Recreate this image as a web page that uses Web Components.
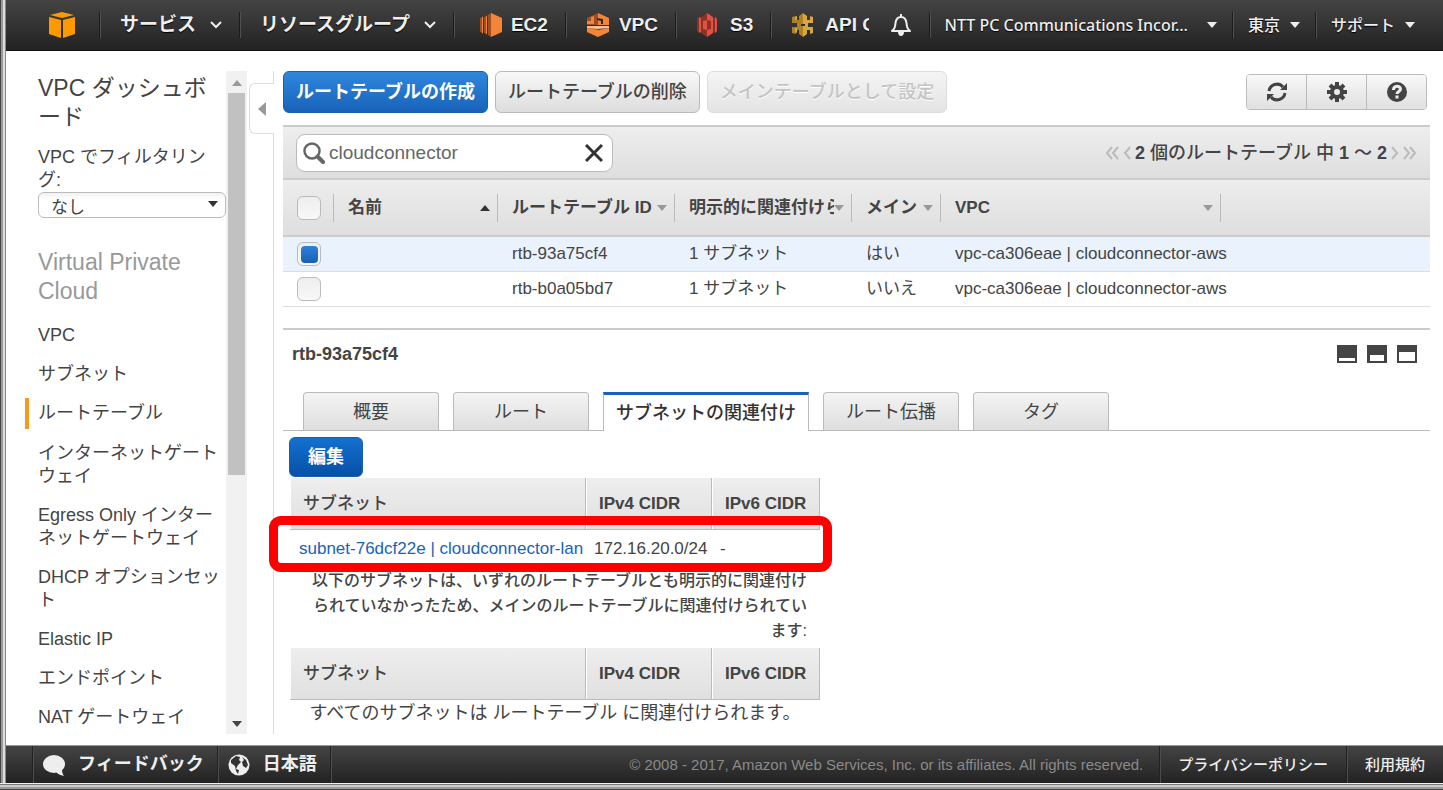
<!DOCTYPE html>
<html lang="ja">
<head>
<meta charset="utf-8">
<title>VPC Management Console</title>
<style>
  html, body { margin: 0; height: 100%; }
  body {
    font-family: "Liberation Sans", "Noto Sans CJK JP", sans-serif;
    font-size: 18px;
    color: #444;
    background: #fff;
    line-break: normal;
  }
</style>
</head>
<body>
<vpc-console></vpc-console>

<script>
const ICONS = {
  cube: ['0 0 26 26', `<g fill="#f90"><path d="M13 0 25 3 13 6 1 3z"/><path d="M0 5l12 3v18L0 22z"/><path d="M26 5 14 8v18l12-4z"/></g>`],
  ec2: ['0 0 22 24', `<path fill="#9d5025" d="M0 5l3-1v16l-3-1zM4 4l3-1v18l-3-1z"/><path fill="#f58536" d="M2 4l1-.5v17L2 20zM6 3l1-.5v19L6 21z"/><path fill="#9d5025" d="M8 2l3-2v24l-3-2z"/><path fill="#f58536" d="M11 0l11 5v14l-11 5z"/>`],
  vpc: ['0 0 23 24', `<path fill="#9d5025" d="M0 5 11 0v24L0 19z"/><path fill="#f58536" d="M11 0l11 5v7H11zM0 15l11 2 11-2v4l-11 5-11-5z"/><path fill="#f58536" d="M4 4l3-1v8H0V8h4z"/><path fill="#2d2d2d" d="M10 5l6 1v5h-2V8l-4-1zM0 12h22v1H0z"/><path fill="#fbbf93" d="M0 13h22v2l-11 1-11-1z"/>`],
  s3: ['0 0 24 24', `<path fill="#8c3123" d="M0 6l2-2v16l-2-2zM4 4l6-4v24l-6-4z"/><path fill="#e05243" d="M2 4l2 1v14l-2 1zM10 0l6 4v16l-6 4zM18 4l2 2v12l-2 2z"/><path fill="#8c3123" d="M16 5l2-1v16l-2-1z"/><path fill="#e05243" d="M6 8l4-1v10l-4-1z"/><path fill="#8c3123" d="M10 7l4 1v8l-4 1z"/>`],
  api: ['0 0 24 24', `<path fill="#ad8226" d="M0 4l4-1v4h3V3l4-3v24l-4-3v-4H4v4l-4-1v-6h5v-4H0z"/><path fill="#d9a741" d="M11 0l4 3v4h3V3l3 1v6h-5v4h5v6l-3 1v-4h-3v4l-4 3zM3 4l2-1v4H3zM3 15h2v5l-2-1z"/><path fill="#2d2d2d" d="M9 11h4v2H9z"/>`],
  bell: ['0 0 22 22', `<path fill="none" stroke="#eee" stroke-width="2" stroke-linejoin="round" d="M2 17c3-3 3-4 3.500-8 .5-4 2-6 5.500-6s5 2 5.500 6c.5 4 .5 5 3.500 8z"/><path fill="#eee" d="M10 0h2v3h-2zM8 18h6c0 2-1 4-3 4s-3-2-3-4z"/>`],
  chevron: ['0 0 12 8', `<path d="M1 1l5 5 5-5" fill="none" stroke="#eee" stroke-width="2"/>`],
  caret: ['0 0 10 6', `<path fill="currentColor" d="M0 0h10L5 6z"/>`],
  refresh: ['0 0 20 20', `<path fill="none" stroke="#444" stroke-width="3" d="M2 9a8 8 0 0 1 14-4M18 11a8 8 0 0 1-14 4"/><path fill="#444" d="M20 1v7h-7zM0 19v-7h7z"/>`],
  gear: ['0 0 20 20', `<path fill="none" stroke="#444" stroke-width="4" d="M10 0v4M10 16v4M0 10h4M16 10h4M3 3l3 3M14 14l3 3M17 3l-3 3M6 14l-3 3"/><circle cx="10" cy="10" r="5" fill="none" stroke="#444" stroke-width="4"/>`],
  help: ['0 0 20 20', `<circle cx="10" cy="10" r="10" fill="#444"/><path fill="none" stroke="#eee" stroke-width="3" d="M6.500 8c0-5 7-4.500 7-1 0 2.500-3.500 2.500-3.500 5"/><path fill="#eee" d="M8.500 13.500h3v3h-3z"/>`],
  search: ['0 0 22 22', `<circle cx="9" cy="9" r="7.500" fill="none" stroke="#666" stroke-width="2.500"/><path d="M14.500 14.500l5.500 5.500" stroke="#666" stroke-width="4" stroke-linecap="round"/>`],
  close: ['0 0 18 18', `<path d="M1 1l16 16M17 1 1 17" stroke="#333" stroke-width="3"/>`],
  first: ['0 0 14 14', `<path d="M7 1 2 7l5 6M13 1 8 7l5 6" fill="none" stroke="#bbb" stroke-width="2"/>`],
  prev: ['0 0 8 14', `<path d="M7 1 2 7l5 6" fill="none" stroke="#bbb" stroke-width="2"/>`],
  next: ['0 0 8 14', `<path d="M1 1l5 6-5 6" fill="none" stroke="#bbb" stroke-width="2"/>`],
  last: ['0 0 14 14', `<path d="M1 1l5 6-5 6M7 1l5 6-5 6" fill="none" stroke="#bbb" stroke-width="2"/>`],
  paneMin: ['0 0 20 18', `<path fill="#444" fill-rule="evenodd" d="M0 0h20v18H0zM2 13v3h16v-3z"/>`],
  paneHalf: ['0 0 20 18', `<path fill="#444" fill-rule="evenodd" d="M0 0h20v18H0zM3 10v6h14v-6z"/>`],
  paneFull: ['0 0 20 18', `<path fill="#444" fill-rule="evenodd" d="M0 0h20v18H0zM2 7v9h16V7z"/>`],
  bubble: ['0 0 22 22', `<ellipse cx="11" cy="10" rx="11" ry="9" fill="#eee"/><path fill="#eee" d="M12 16h7c0 3 1 4 2 6-4-1-7-2-9-6z"/>`],
  globe: ['0 0 22 22', `<circle cx="11" cy="11" r="10.500" fill="#eee"/><path fill="#333" d="M3 6l5-4 4 1-1 3 2 2-3 3-2 4 3 1-1 4-2-3-1-5-4-3zM14 3l4 3 2 5-2 3-3-2-1-4 2-2z"/>`],
  left: ['0 0 8 14', `<path fill="#999" d="M8 0v14L0 7z"/>`],
};

// small helper: opens the shadow root and fills it
function define(name, css, html) {
  customElements.define(name, class extends HTMLElement {
    connectedCallback() {
      if (this.shadowRoot) return;
      const root = this.attachShadow({ mode: 'open' });
      root.innerHTML = `<style>:host, * { box-sizing: border-box; } ${css}</style>` +
        (typeof html === 'function' ? html(this) : html);
    }
  });
}

define('ui-icon', `
  :host { display: block; flex: none; }
  svg { display: block; }
`, el => {
  const [box, body] = ICONS[el.getAttribute('name')];
  const [, , w, h] = box.split(' ');
  return `<svg viewBox="${box}" width="${w}" height="${h}" aria-hidden="true">${body}</svg>`;
});

/* ---------- header ---------- */

define('nav-item', `
  :host { display: flex; align-items: center; flex: none; height: 26px; border-right: 1px solid #1c1c1c; box-shadow: 1px 0 #505050; }
  :host([last]) { border: 0; box-shadow: none; }
  button {
    display: flex; align-items: center; gap: 14px; padding: 0 17px 0 20px; border: 0; background: none;
    font: bold 19px/26px "Liberation Sans", "Noto Sans CJK JP", sans-serif;
    color: #eee; text-shadow: 0 1px 1px #000; white-space: nowrap;
  }
  :host([home]) button { padding: 0 24px 0 43px; }
  :host([service]) button { gap: 9px; padding: 0 17px 0 21px; }
  :host([small]) button { gap: 10px; padding: 0 15px; font: 500 16px/26px "Noto Sans", "Noto Sans CJK JP", sans-serif; }
  :host([account]) button { gap: 19px; }
  :host([icon]) button { padding: 0 17px 0 21px; }
`, `<button type="button"><slot></slot></button>`);

define('aws-header', `
  :host {
    display: flex; align-items: center; flex: none; height: 51px; padding-right: 13px;
    background: linear-gradient(#444, #222); border-bottom: 1px solid #111;
  }
  .services { display: flex; flex: 1; min-width: 0; padding-left: 5px; overflow: hidden; }
`, `
  <nav-item home><ui-icon name="cube"></ui-icon></nav-item>
  <nav-item>サービス <ui-icon name="chevron"></ui-icon></nav-item>
  <nav-item>リソースグループ <ui-icon name="chevron"></ui-icon></nav-item>
  <div class="services">
    <nav-item service><ui-icon name="ec2"></ui-icon>EC2</nav-item>
    <nav-item service><ui-icon name="vpc"></ui-icon>VPC</nav-item>
    <nav-item service><ui-icon name="s3"></ui-icon>S3</nav-item>
    <nav-item service last><ui-icon name="api"></ui-icon>API G</nav-item>
  </div>
  <nav-item icon><ui-icon name="bell"></ui-icon></nav-item>
  <nav-item small account>NTT PC Communications Incor... <ui-icon name="caret"></ui-icon></nav-item>
  <nav-item small>東京 <ui-icon name="caret"></ui-icon></nav-item>
  <nav-item small last>サポート <ui-icon name="caret"></ui-icon></nav-item>
`);

/* ---------- sidebar ---------- */

define('side-link', `
  :host { display: block; margin-bottom: 16px; }
  a { display: block; color: #444; text-decoration: none; line-height: 23px; }
  :host([active]) { margin: -4px 0 13px -13px; }
  :host([active]) a { padding: 4px 0 4px 9px; border-left: 4px solid #f7981f; }
`, `<a href="#"><slot></slot></a>`);

define('vpc-sidebar', `
  :host { display: flex; flex: none; width: 241px; min-height: 0; }
  nav { flex: 1; min-width: 0; overflow: hidden; padding-left: 32px; }
  h1, h2 { margin: 0; font-weight: normal; font-size: 23px; line-height: 29px; }
  h1 { padding: 3px 14px 0 0; margin-bottom: 14px; }
  h2 { margin: 30px 0 18px; color: #999; }
  label { display: block; line-height: 23px; font-size: 18px; }
  .select { position: relative; color: #333; }
  select {
    display: block; appearance: none; width: 100%; height: 26px; padding: 4px 12px 0;
    border: 1px solid #bbb; border-radius: 6px; background: linear-gradient(#f2f2f2, #fff 30%);
    font: 17px/22px "Liberation Sans", "Noto Sans CJK JP", sans-serif; color: #444;
  }
  .select ui-icon { position: absolute; right: 8px; top: 9px; pointer-events: none; }
  .scrollbar { display: flex; flex-direction: column; align-items: center; flex: none; width: 21px; padding: 9px 0 7px; background: #f1f1f1; }
  .thumb { width: 17px; height: 382px; margin: 7px 0 auto; background: #c1c1c1; }
  .up { color: #999; transform: rotate(180deg); }
`, `
  <nav>
    <h1>VPC ダッシュボード</h1>
    <label for="filter">VPC でフィルタリング:</label>
    <div class="select">
      <select id="filter"><option>なし</option></select>
      <ui-icon name="caret"></ui-icon>
    </div>
    <h2>Virtual Private Cloud</h2>
    <side-link>VPC</side-link>
    <side-link>サブネット</side-link>
    <side-link active>ルートテーブル</side-link>
    <side-link>インターネットゲートウェイ</side-link>
    <side-link>Egress Only インターネットゲートウェイ</side-link>
    <side-link>DHCP オプションセット</side-link>
    <side-link>Elastic IP</side-link>
    <side-link>エンドポイント</side-link>
    <side-link>NAT ゲートウェイ</side-link>
  </nav>
  <div class="scrollbar">
    <ui-icon class="up" name="caret"></ui-icon>
    <div class="thumb"></div>
    <ui-icon name="caret"></ui-icon>
  </div>
`);

define('side-collapse', `
  :host { display: flex; flex-direction: column; flex: none; width: 27px; padding-left: 2px; }
  .line { height: 12px; border-right: 1px solid #ddd; }
  .rest { flex: 1; }
  button { height: 51px; padding: 0 0 0 8px; border: 1px solid #ddd; border-right: 0; border-radius: 6px 0 0 6px; background: #fff; }
`, `
  <div class="line"></div>
  <button type="button" aria-label="折りたたむ"><ui-icon name="left"></ui-icon></button>
  <div class="line rest"></div>
`);

/* ---------- buttons ---------- */

define('tool-button', `
  :host { display: block; }
  button {
    display: block; height: 42px; padding: 0 12px; border: 1px solid #bbb; border-radius: 6px;
    background: linear-gradient(#f8f8f8, #ddd);
    font: 500 18px/30px "Liberation Sans", "Noto Sans CJK JP", sans-serif; color: #444;
  }
  :host([primary]) button { border-color: #1a5fae; background: linear-gradient(#2f86de, #1863b9); color: #fff; font-weight: bold; }
  :host([edit]) button { height: 40px; padding: 0 18px; background: linear-gradient(#1470d0, #0551a5); }
  button:disabled { border-color: #ddd; background: linear-gradient(#f4f4f4, #e4e4e4); color: #c4c4c4; text-shadow: 0 1px #fff; }
`, el => `<button type="button"${el.hasAttribute('disabled') ? ' disabled' : ''}><slot></slot></button>`);

define('icon-group', `
  :host { display: flex; margin: 3px 3px 0 auto; height: 36px; border: 1px solid #bbb; border-radius: 4px; overflow: hidden; }
  button { display: flex; align-items: center; justify-content: center; width: 60px; padding: 0; border: 0; border-right: 1px solid #bbb; background: linear-gradient(#f8f8f8, #e0e0e0); }
  button:last-child { border: 0; width: 59px; }
`, `
  <button type="button" aria-label="更新"><ui-icon name="refresh"></ui-icon></button>
  <button type="button" aria-label="設定"><ui-icon name="gear"></ui-icon></button>
  <button type="button" aria-label="ヘルプ"><ui-icon name="help"></ui-icon></button>
`);

/* ---------- route tables ---------- */

define('filter-bar', `
  :host {
    display: flex; align-items: center; justify-content: space-between; height: 55px; padding: 0 13px;
    background: linear-gradient(#eee, #dedede); border-top: 2px solid #ccc; border-bottom: 2px solid #ccc;
  }
  .search { display: flex; align-items: center; gap: 4px; width: 317px; height: 38px; padding: 0 9px 0 6px; border: 1px solid #bbb; border-radius: 9px; background: #fff; }
  input { flex: 1; min-width: 0; padding: 0; border: 0; outline: 0; background: none; font: 19px/24px "Liberation Sans", sans-serif; color: #666; }
  button { padding: 0; border: 0; background: none; }
  .pager { display: flex; align-items: center; gap: 4px; }
  .pager span { font-size: 18px; font-weight: 500; line-height: 24px; }
`, `
  <div class="search">
    <ui-icon name="search"></ui-icon>
    <input type="text" value="cloudconnector" aria-label="検索">
    <button type="button" aria-label="クリア"><ui-icon name="close"></ui-icon></button>
  </div>
  <div class="pager">
    <button type="button" aria-label="最初"><ui-icon name="first"></ui-icon></button>
    <button type="button" aria-label="前へ"><ui-icon name="prev"></ui-icon></button>
    <span><b>2</b> 個のルートテーブル 中 <b>1</b> 〜 <b>2</b></span>
    <button type="button" aria-label="次へ"><ui-icon name="next"></ui-icon></button>
    <button type="button" aria-label="最後"><ui-icon name="last"></ui-icon></button>
  </div>
`);

const ROUTE_TABLES = [
  { id: 'rtb-93a75cf4', subnets: '1 サブネット', main: 'はい', vpc: 'vpc-ca306eae | cloudconnector-aws', checked: true },
  { id: 'rtb-b0a05bd7', subnets: '1 サブネット', main: 'いいえ', vpc: 'vpc-ca306eae | cloudconnector-aws' },
];
const COLUMNS = [['名前', 164, true], ['ルートテーブル ID', 177], ['明示的に関連付けら', 177], ['メイン', 89], ['VPC', 280]];

define('route-grid', `
  :host { display: block; }
  table { width: 100%; table-layout: fixed; border-collapse: separate; border-spacing: 0; font-size: 17px; }
  th, td { padding: 0; text-align: left; }
  thead th { height: 57px; border-bottom: 2px solid #ccc; background: linear-gradient(#ededed, #dedede); font-weight: normal; }
  .head { display: flex; align-items: center; height: 28px; border-right: 1px solid #bbb; box-shadow: 1px 0 #fff; }
  .check { padding-left: 14px; }
  th button {
    display: flex; align-items: center; justify-content: space-between; width: 100%; padding: 0 7px 0 14px;
    border: 0; background: none; color: #999; text-align: left;
    font: 500 17px/24px "Liberation Sans", "Noto Sans CJK JP", sans-serif;
  }
  th button span { overflow: hidden; white-space: nowrap; color: #444; font-weight: bold; }
  .asc { transform: rotate(180deg); color: #333; }
  td { height: 35px; padding-left: 14px; border-bottom: 1px solid #ddd; line-height: 24px; white-space: nowrap; }
  .on td { background: #e9f2fd; }
  input {
    display: grid; place-content: center; appearance: none; width: 24px; height: 24px; margin: 0;
    border: 1px solid #bbb; border-radius: 6px; background: linear-gradient(#eee, #f8f8f8);
  }
  input:checked::before { content: ""; width: 17px; height: 17px; border-radius: 4px; background: linear-gradient(#2f80d8, #1660b6); }
`, () => `
  <table>
    <colgroup><col style="width: 51px">${COLUMNS.map(c => `<col style="width: ${c[1]}px">`).join('')}<col></colgroup>
    <thead><tr>
      <th><div class="head check"><input type="checkbox" aria-label="すべて選択"></div></th>
      ${COLUMNS.map(([text, , asc]) => `<th><div class="head"><button type="button"><span>${text}</span><ui-icon name="caret"${asc ? ' class="asc"' : ''}></ui-icon></button></div></th>`).join('')}
      <th></th>
    </tr></thead>
    <tbody>
      ${ROUTE_TABLES.map(r => `<tr${r.checked ? ' class="on"' : ''}>
        <td><input type="checkbox" aria-label="${r.id}"${r.checked ? ' checked' : ''}></td>
        <td></td><td>${r.id}</td><td>${r.subnets}</td><td>${r.main}</td><td>${r.vpc}</td><td></td>
      </tr>`).join('')}
    </tbody>
  </table>
`);

/* ---------- detail pane ---------- */

define('tab-item', `
  :host { display: block; }
  button {
    display: block; min-width: 136px; height: 38px; padding: 0 14px; border: 1px solid #bbb; border-bottom: 0; border-radius: 4px 4px 0 0;
    background: linear-gradient(#f4f4f4, #dedede); font: 18px/34px "Liberation Sans", "Noto Sans CJK JP", sans-serif; color: #444;
  }
  :host([active]) { margin-bottom: -1px; }
  :host([active]) button { height: 39px; padding: 0 12px; border-top: 3px solid #1863b9; border-radius: 0; background: #fff; font-weight: 500; color: #333; }
`, `<button type="button" role="tab"><slot></slot></button>`);

define('subnet-table', `
  :host { display: block; position: relative; width: 530px; }
  table { width: 100%; table-layout: fixed; border-collapse: separate; border-spacing: 0; }
  th {
    height: 52px; padding: 0 13px; border-right: 1px solid #bbb; border-bottom: 1px solid #bbb; box-shadow: inset 1px 0 #fff;
    background: linear-gradient(#eee, #e0e0e0); text-align: left; font-size: 17px; font-weight: 500; line-height: 24px; white-space: nowrap;
  }
  th.latin { font-weight: bold; }
`, `
  <table>
    <colgroup><col style="width: 296px"><col style="width: 126px"><col></colgroup>
    <thead><tr><th>サブネット</th><th class="latin">IPv4 CIDR</th><th class="latin">IPv6 CIDR</th></tr></thead>
  </table>
  <slot></slot>
`);

define('subnet-row', `
  :host { display: grid; grid-template-columns: 295px 126px 1fr; height: 38px; padding: 0 9px; align-items: center; font-size: 17px; line-height: 24px; white-space: nowrap; }
  ::slotted(a) { color: #1863b9; text-decoration: none; }
  .mark { position: absolute; left: -21px; right: -12px; top: 38px; height: 56px; border: 9px solid #f00; border-radius: 12px; pointer-events: none; }
`, `<slot name="subnet"></slot><slot name="v4"></slot><slot name="v6"></slot><div class="mark"></div>`);

define('route-detail', `
  :host { display: block; margin-top: 21px; border-top: 2px solid #ccc; }
  header { display: flex; align-items: center; justify-content: space-between; height: 48px; padding: 0 13px 0 9px; }
  h3 { margin: 0; font-size: 18px; line-height: 24px; }
  .panes { display: flex; gap: 10px; }
  .panes button { padding: 0; border: 0; background: none; }
  .tabs { display: flex; align-items: end; gap: 14px; margin-top: 14px; padding-left: 20px; border-bottom: 1px solid #bbb; }
  .body { padding: 6px 0 0 7px; }
  tool-button { width: max-content; margin: 0 0 1px -1px; }
  p { width: 510px; margin: 0 0 5px 7px; font-size: 16px; line-height: 25px; font-weight: 500; text-align: right; }
  .empty { width: auto; margin: 0; font-size: 18px; line-height: 27px; font-weight: normal; text-align: center; }
`, `
  <header>
    <h3>rtb-93a75cf4</h3>
    <div class="panes">
      <button type="button" aria-label="最小"><ui-icon name="paneMin"></ui-icon></button>
      <button type="button" aria-label="半分"><ui-icon name="paneHalf"></ui-icon></button>
      <button type="button" aria-label="最大"><ui-icon name="paneFull"></ui-icon></button>
    </div>
  </header>
  <div class="tabs" role="tablist">
    <tab-item>概要</tab-item>
    <tab-item>ルート</tab-item>
    <tab-item active>サブネットの関連付け</tab-item>
    <tab-item>ルート伝播</tab-item>
    <tab-item>タグ</tab-item>
  </div>
  <div class="body">
    <tool-button primary edit>編集</tool-button>
    <subnet-table>
      <subnet-row>
        <a slot="subnet" href="#">subnet-76dcf22e | cloudconnector-lan</a>
        <span slot="v4">172.16.20.0/24</span>
        <span slot="v6">-</span>
      </subnet-row>
    </subnet-table>
    <p>以下のサブネットは、いずれのルートテーブルとも明示的に関連付けられていなかったため、メインのルートテーブルに関連付けられています:</p>
    <subnet-table>
      <p class="empty">すべてのサブネットは ルートテーブル に関連付けられます。</p>
    </subnet-table>
  </div>
`);

/* ---------- footer ---------- */

define('aws-footer', `
  :host {
    display: flex; flex: none; height: 38px; padding-left: 26px;
    background: linear-gradient(#444, #222); border-top: 1px solid #999; line-height: 37px;
  }
  a { display: flex; align-items: center; gap: 13px; padding: 0 13px 0 10px; border-left: 1px solid #222; box-shadow: inset 1px 0 #4c4c4c; color: #eee; text-decoration: none; font-weight: bold; }
  a.legal { padding: 0 18px; font-size: 15px; font-weight: 500; }
  .copy { flex: 1; padding-right: 16px; border-left: 1px solid #222; box-shadow: inset 1px 0 #4c4c4c; text-align: right; font-size: 15px; color: #8a8a8a; white-space: nowrap; }
`, `
  <a href="#"><ui-icon name="bubble"></ui-icon>フィードバック</a>
  <a href="#"><ui-icon name="globe"></ui-icon>日本語</a>
  <span class="copy">© 2008 - 2017, Amazon Web Services, Inc. or its affiliates. All rights reserved.</span>
  <a class="legal" href="#">プライバシーポリシー</a>
  <a class="legal" href="#">利用規約</a>
`);

define('vpc-console', `
  :host {
    display: flex; height: 100vh; padding: 0 0 7px 6px;
    background:
      linear-gradient(#eee 1px, #777 1px 2px, #ccc 2px 4px, #999 4px 6px, #444 6px) bottom / 100% 7px no-repeat,
      linear-gradient(90deg, #444 1px, #999 1px 3px, #ddd 3px 5px, #888 5px);
  }
  .page { display: flex; flex-direction: column; flex: 1; min-width: 0; background: #fff; }
  .content { display: flex; flex: 1; min-height: 0; padding: 20px 13px 11px 0; }
  main { flex: 1; min-width: 0; margin-left: 9px; }
  .toolbar { display: flex; gap: 7px; margin-bottom: 12px; }
`, `
  <div class="page">
    <aws-header></aws-header>
    <div class="content">
      <vpc-sidebar></vpc-sidebar>
      <side-collapse></side-collapse>
      <main>
        <div class="toolbar">
          <tool-button primary>ルートテーブルの作成</tool-button>
          <tool-button>ルートテーブルの削除</tool-button>
          <tool-button disabled>メインテーブルとして設定</tool-button>
          <icon-group></icon-group>
        </div>
        <filter-bar></filter-bar>
        <route-grid></route-grid>
        <route-detail></route-detail>
      </main>
    </div>
    <aws-footer></aws-footer>
  </div>
`);
</script>
</body>
</html>
